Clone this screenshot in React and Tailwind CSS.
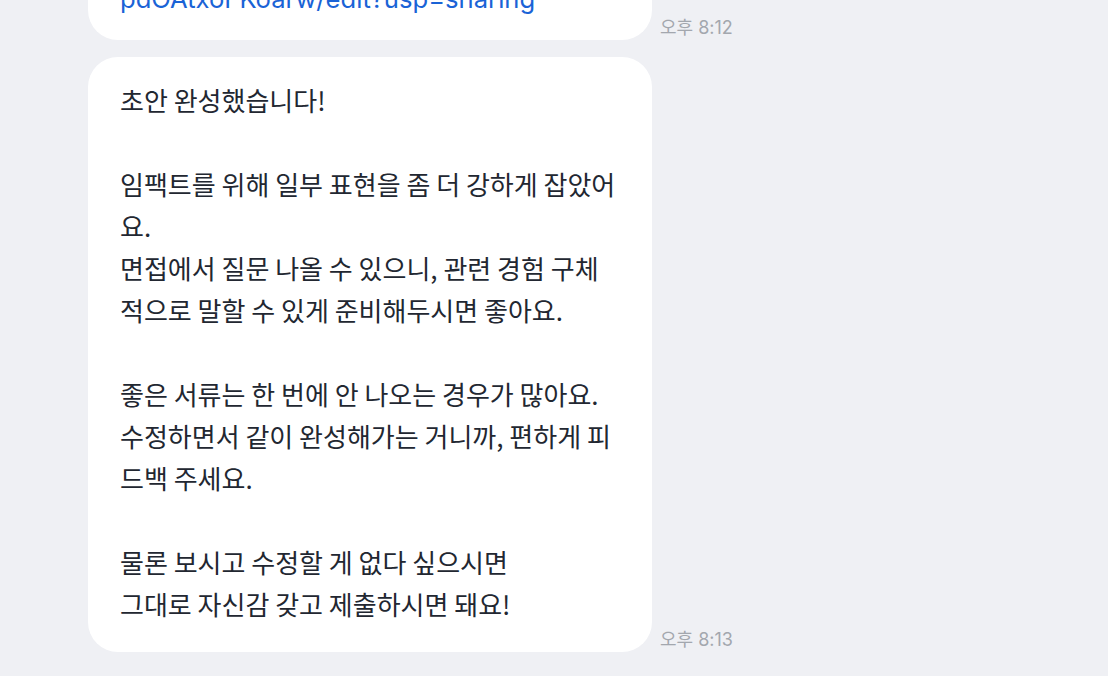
const FONT = { fontFamily: '"Noto Sans CJK KR", "Noto Sans", sans-serif' };
const LATIN = { fontFamily: 'Inter, "Noto Sans CJK KR", sans-serif' };

const MESSAGES = [
  {
    id: 1,
    time: "오후 8:12",
    link: "https://docs.google.com/document/d/1xQe7pdOAtxoFKoarw/edit?usp=sharing",
    lines: ["pdOAtxoFKoarw/edit?usp=sharing"],
  },
  {
    id: 2,
    time: "오후 8:13",
    lines: [
      "초안 완성했습니다!",
      "",
      "임팩트를 위해 일부 표현을 좀 더 강하게 잡았어요.",
      "면접에서 질문 나올 수 있으니, 관련 경험 구체적으로 말할 수 있게 준비해두시면 좋아요.",
      "",
      "좋은 서류는 한 번에 안 나오는 경우가 많아요.",
      "수정하면서 같이 완성해가는 거니까, 편하게 피드백 주세요.",
      "",
      "물론 보시고 수정할 게 없다 싶으시면",
      "그대로 자신감 갖고 제출하시면 돼요!",
    ],
  },
];

function Bubble({ msg, first }) {
  return (
    <div className={`flex items-end gap-2 pl-[88px] ${first ? "-mt-[46px]" : ""}`}>
      <div
        className={`w-[564px] rounded-[30px] bg-white pl-8 pr-8 text-[26px] leading-[42px] text-[#222731] ${
          msg.link ? "pt-[24px] pb-[20px]" : "pt-[22px] pb-[27px]"
        }`}
      >
        {msg.link ? (
          <a href={msg.link} style={LATIN} className="block whitespace-nowrap text-[25.6px] text-[#1a63d6]">
            {msg.lines[0]}
          </a>
        ) : (
          msg.lines.map((l, i) => <p key={i}>{l || "\u00a0"}</p>)
        )}
      </div>
      <span style={LATIN} className="mb-[3px] whitespace-nowrap text-[18px] leading-none text-[#a3a7ae]">
        {msg.time}
      </span>
    </div>
  );
}

export default function App() {
  return (
    <div style={FONT} className="h-[676px] w-[1108px] overflow-hidden bg-[#eff0f4]">
      <div className="flex flex-col gap-[17px]">
        {MESSAGES.map((m, i) => (
          <Bubble key={m.id} msg={m} first={i === 0} />
        ))}
      </div>
    </div>
  );
}
